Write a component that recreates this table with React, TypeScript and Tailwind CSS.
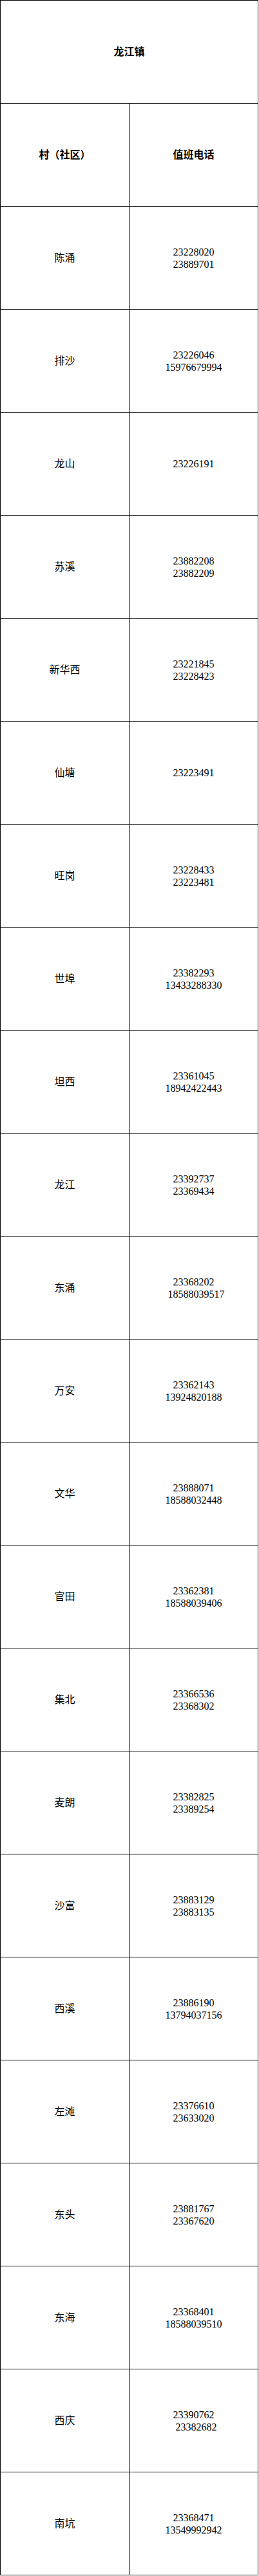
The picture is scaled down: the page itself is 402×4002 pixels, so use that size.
const villages: { name: string; phones: string[] }[] = [
  { name: '陈涌', phones: ['23228020', '23889701'] },
  { name: '排沙', phones: ['23226046', '15976679994'] },
  { name: '龙山', phones: ['23226191'] },
  { name: '苏溪', phones: ['23882208', '23882209'] },
  { name: '新华西', phones: ['23221845', '23228423'] },
  { name: '仙塘', phones: ['23223491'] },
  { name: '旺岗', phones: ['23228433', '23223481'] },
  { name: '世埠', phones: ['23382293', '13433288330'] },
  { name: '坦西', phones: ['23361045', '18942422443'] },
  { name: '龙江', phones: ['23392737', '23369434'] },
  { name: '东涌', phones: ['23368202', '  18588039517'] },
  { name: '万安', phones: ['23362143', '13924820188'] },
  { name: '文华', phones: ['23888071', '18588032448'] },
  { name: '官田', phones: ['23362381', '18588039406'] },
  { name: '集北', phones: ['23366536', '23368302'] },
  { name: '麦朗', phones: ['23382825', '23389254'] },
  { name: '沙富', phones: ['23883129', '23883135'] },
  { name: '西溪', phones: ['23886190', '13794037156'] },
  { name: '左滩', phones: ['23376610', '23633020'] },
  { name: '东头', phones: ['23881767', '23367620'] },
  { name: '东海', phones: ['23368401', '18588039510'] },
  { name: '西庆', phones: ['23390762', '  23382682'] },
  { name: '南坑', phones: ['23368471', '13549992942'] },
];

function Cell({ children, bold = false }: { children: React.ReactNode; bold?: boolean }) {
  return (
    <div
      className={`w-[200px] h-[160px] border-r border-b border-black flex flex-col items-center justify-center text-center ${bold ? 'font-bold' : ''}`}
    >
      {children}
    </div>
  );
}

export default function App() {
  return (
    <div className="bg-white text-black text-[16px] leading-[19px] font-['Liberation_Serif','Noto_Sans_CJK_SC',serif]">
      <div className="w-[401px] border-t border-l border-black">
        {/* Town header */}
        <div className="w-[400px] h-[160px] border-r border-b border-black flex items-center justify-center font-bold">
          龙江镇
        </div>

        {/* Column headers */}
        <div className="flex">
          <Cell bold>村（社区）</Cell>
          <Cell bold>值班电话</Cell>
        </div>

        {villages.map((v) => (
          <div key={v.name} className="flex">
            <Cell>{v.name}</Cell>
            <Cell>
              {v.phones.map((p, i) => (
                <span key={i} className="whitespace-pre">
                  {p}
                </span>
              ))}
            </Cell>
          </div>
        ))}
      </div>
    </div>
  );
}
